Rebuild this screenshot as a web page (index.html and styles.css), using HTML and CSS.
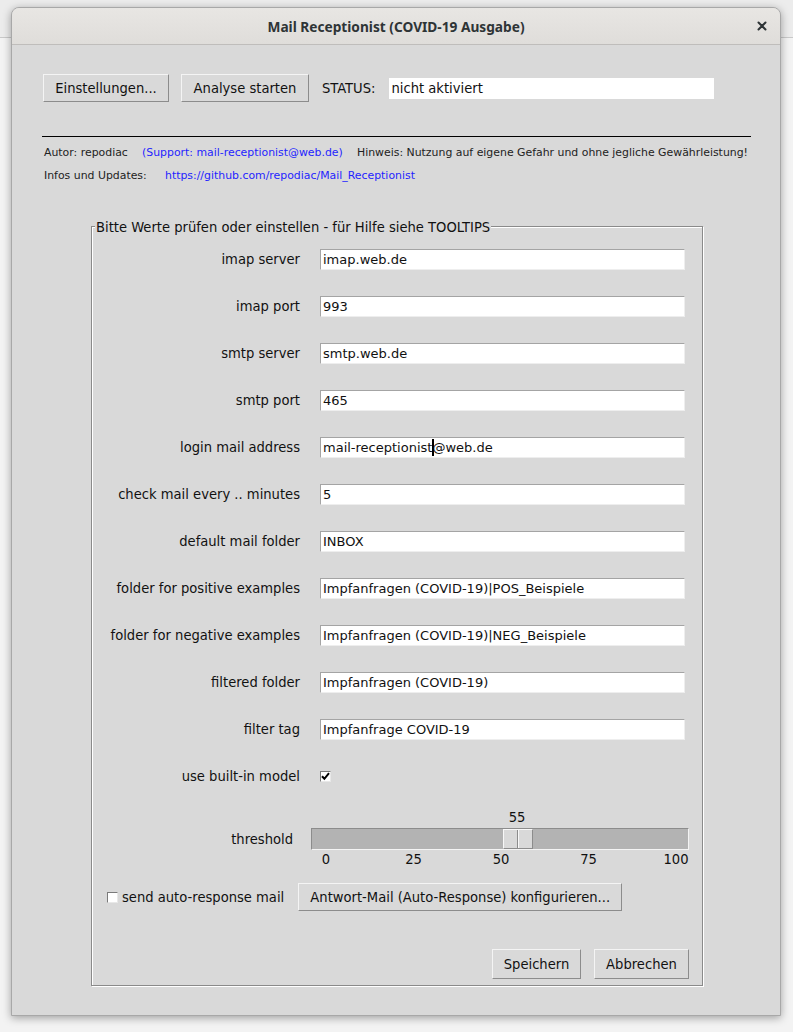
FILE: index.html
```html
<!DOCTYPE html>
<html>
<head>
<meta charset="utf-8">
<title>Mail Receptionist</title>
<link rel="stylesheet" href="styles.css">
</head>
<body>
<div class="window">
  <div class="titlebar">
    <span class="title">Mail Receptionist (COVID-19 Ausgabe)</span>
    <svg class="close" width="10" height="10" viewBox="0 0 10 10"><path d="M1.5 1.5L8.5 8.5M8.5 1.5L1.5 8.5" stroke="#2e3436" stroke-width="2" stroke-linecap="round"/></svg>
  </div>
  <div class="content">
    <div class="toolbar">
      <div class="btn btn-settings">Einstellungen...</div>
      <div class="btn btn-analyse">Analyse starten</div>
      <span class="status-label">STATUS:</span>
      <div class="status-field">nicht aktiviert</div>
    </div>
    <div class="rule"></div>
    <div class="info">
      <div class="info-row">
        <span class="c-author">Autor: repodiac</span>
        <span class="c-support link">(Support: mail-receptionist@web.de)</span>
        <span>Hinweis: Nutzung auf eigene Gefahr und ohne jegliche Gewährleistung!</span>
      </div>
      <div class="info-row">
        <span class="c-infos">Infos und Updates:</span>
        <span class="link">https://github.com/repodiac/Mail_Receptionist</span>
      </div>
    </div>
    <fieldset class="group">
      <legend>Bitte Werte prüfen oder einstellen - für Hilfe siehe TOOLTIPS</legend>
      <div class="form">
        <span class="lbl">imap server</span><div class="entry">imap.web.de</div>
        <span class="lbl">imap port</span><div class="entry">993</div>
        <span class="lbl">smtp server</span><div class="entry">smtp.web.de</div>
        <span class="lbl">smtp port</span><div class="entry">465</div>
        <span class="lbl">login mail address</span><div class="entry">mail-receptionist<span class="caret"></span>@web.de</div>
        <span class="lbl">check mail every .. minutes</span><div class="entry">5</div>
        <span class="lbl">default mail folder</span><div class="entry">INBOX</div>
        <span class="lbl">folder for positive examples</span><div class="entry">Impfanfragen (COVID-19)|POS_Beispiele</div>
        <span class="lbl">folder for negative examples</span><div class="entry">Impfanfragen (COVID-19)|NEG_Beispiele</div>
        <span class="lbl">filtered folder</span><div class="entry">Impfanfragen (COVID-19)</div>
        <span class="lbl">filter tag</span><div class="entry">Impfanfrage COVID-19</div>
        <span class="lbl">use built-in model</span>
        <div class="check-cell">
          <span class="checkbox"><svg width="9" height="9" viewBox="0 0 9 9"><path d="M1 4.2L3.4 6.8L8 1.2" fill="none" stroke="#000" stroke-width="2"/></svg></span>
        </div>
      </div>
      <div class="slider-row">
        <span class="slider-label">threshold</span>
        <div class="scale">
          <div class="scale-value"><span class="value-anchor" style="margin-left: 206px">55</span></div>
          <div class="trough">
            <div class="handle" style="left: 191px"></div>
          </div>
          <div class="ticks">
            <span class="tick"><span>0</span></span>
            <span class="tick"><span>25</span></span>
            <span class="tick"><span>50</span></span>
            <span class="tick"><span>75</span></span>
            <span class="tick"><span>100</span></span>
          </div>
        </div>
      </div>
      <div class="auto-row">
        <span class="checkbox"></span>
        <span class="auto-label">send auto-response mail</span>
        <div class="btn btn-auto">Antwort-Mail (Auto-Response) konfigurieren...</div>
      </div>
      <div class="actions">
        <div class="btn btn-save">Speichern</div>
        <div class="btn btn-cancel">Abbrechen</div>
      </div>
    </fieldset>
  </div>
</div>
</body>
</html>
```
FILE: styles.css
```css
html, body {
  margin: 0;
  padding: 0;
}
body {
  width: 793px;
  height: 1032px;
  overflow: hidden;
  background: linear-gradient(to bottom, #ececec 0, #ececec 37px, #c9c9c9 37px, #c9c9c9 38px, #f3f3f3 38px);
  font-family: "DejaVu Sans Condensed", "DejaVu Sans", sans-serif;
  font-stretch: condensed;
  font-size: 14.6px;
  color: #111;
}
.window {
  margin: 7px 0 0 11px;
  width: 770px;
  height: 1009px;
  box-sizing: border-box;
  border: 1px solid #a8a8a8;
  border-radius: 8px 8px 0 0;
  background: #d9d9d9;
  box-shadow: 0 2px 8px rgba(0, 0, 0, 0.35);
  display: flex;
  flex-direction: column;
  overflow: hidden;
}
.titlebar {
  height: 36px;
  flex: none;
  border-bottom: 1px solid #bfbdbb;
  background: linear-gradient(to bottom, #e8e6e3, #dfddda);
  display: flex;
  align-items: center;
  justify-content: center;
  position: relative;
}
.title {
  font-family: "Noto Sans", "Open Sans", sans-serif;
  font-stretch: normal;
  font-weight: bold;
  font-size: 13.7px;
  color: #2e3436;
}
.close {
  position: absolute;
  right: 13px;
  top: 13px;
}
.content {
  flex: 1;
  padding: 29px 0 0 31px;
}
.toolbar {
  display: flex;
  align-items: center;
  height: 28px;
}
.btn {
  box-sizing: border-box;
  height: 28px;
  display: flex;
  align-items: center;
  justify-content: center;
  padding-bottom: 1px;
  background: #d9d9d9;
  border: 1px solid;
  border-color: #f4f4f4 #8c8c8c #8c8c8c #f4f4f4;
  font-size: 14.6px;
  color: #111;
  white-space: nowrap;
}
.btn-settings { width: 126px; }
.btn-analyse { width: 128px; margin-left: 12px; }
.status-label {
  margin-left: 13px;
  padding-bottom: 1px;
}
.status-field {
  margin-left: 14px;
  width: 325px;
  height: 21px;
  box-sizing: border-box;
  background: #fff;
  line-height: 20px;
  padding-left: 2px;
}
.rule {
  margin: 34px 0 0 -1px;
  width: 709px;
  height: 1px;
  background: #000;
}
.info {
  margin: 4px 0 0 1px;
  font-family: "DejaVu Sans", sans-serif;
  font-stretch: normal;
  font-size: 10.9px;
  color: #222;
}
.info-row {
  display: flex;
  height: 23px;
  align-items: center;
  white-space: nowrap;
}
.link { color: #1f1fff; }
.c-author { width: 98px; }
.c-support { width: 215px; }
.c-infos { width: 121px; }

.group {
  margin: 31px 0 0 48px;
  width: 612px;
  box-sizing: border-box;
  border: 1px solid #8a8a8a;
  box-shadow: inset 1px 1px 0 #fff, 1px 1px 0 #fff;
  padding: 14px 0 6px 0;
  min-width: 0;
}
.group legend {
  padding: 0 1px;
  margin-left: 3px;
  line-height: 17px;
  background: #d9d9d9;
  color: #111;
}
.form {
  display: grid;
  grid-template-columns: 208px 365px;
  column-gap: 20px;
  row-gap: 26px;
  grid-auto-rows: 21px;
}
.lbl {
  text-align: right;
  line-height: 19px;
  white-space: nowrap;
}
.entry {
  box-sizing: border-box;
  height: 21px;
  background: #fff;
  border: 1px solid;
  border-color: #a4a4a4 #eeeeee #eeeeee #a4a4a4;
  font-family: "DejaVu Sans", sans-serif;
  font-stretch: normal;
  font-size: 13px;
  line-height: 19px;
  padding-left: 2px;
  color: #111;
  white-space: nowrap;
}
.caret {
  display: inline-block;
  width: 2px;
  height: 17px;
  background: #000;
  vertical-align: -4px;
  margin-right: -2px;
}
.check-cell {
  display: flex;
  align-items: center;
}
.checkbox {
  box-sizing: border-box;
  width: 11px;
  height: 11px;
  background: #fff;
  border: 1px solid;
  border-color: #7a7a7a #e8e8e8 #e8e8e8 #7a7a7a;
  display: flex;
  align-items: center;
  justify-content: center;
  flex: none;
}
.slider-row {
  margin-top: 21px;
  display: grid;
  grid-template-columns: 201px 378px;
  column-gap: 18px;
}
.slider-label {
  text-align: right;
  padding-top: 20px;
  line-height: 21px;
}
.scale {
  display: flex;
  flex-direction: column;
}
.scale-value {
  height: 17px;
  line-height: 17px;
  display: flex;
}
.value-anchor {
  width: 0;
  display: flex;
  justify-content: center;
}
.trough {
  margin-top: 3px;
  height: 22px;
  box-sizing: border-box;
  background: #b3b3b3;
  border: 1px solid;
  border-color: #8c8c8c #f4f4f4 #f4f4f4 #8c8c8c;
  position: relative;
}
.handle {
  position: absolute;
  top: 0;
  width: 30px;
  height: 20px;
  box-sizing: border-box;
  background: #d9d9d9;
  border: 1px solid;
  border-color: #f8f8f8 #8c8c8c #8c8c8c #f8f8f8;
}
.handle::after {
  content: "";
  position: absolute;
  left: 13px;
  top: 0;
  width: 1px;
  height: 18px;
  background: #8c8c8c;
  box-shadow: 1px 0 0 #f8f8f8;
}
.ticks {
  margin: 1px 13px 0 15px;
  height: 17px;
  line-height: 16px;
  display: flex;
  justify-content: space-between;
}
.tick {
  width: 0;
  display: flex;
  justify-content: center;
}
.auto-row {
  margin-top: 15px;
  display: flex;
  align-items: center;
  padding-left: 15px;
}
.auto-label {
  margin-left: 4px;
  padding-bottom: 1px;
}
.btn-auto {
  width: 324px;
  margin-left: 14px;
}
.actions {
  margin-top: 38px;
  display: flex;
  justify-content: flex-end;
  padding-right: 13px;
  gap: 13px;
}
.btn-save { width: 89px; height: 30px; }
.btn-cancel { width: 95px; height: 30px; }
```
